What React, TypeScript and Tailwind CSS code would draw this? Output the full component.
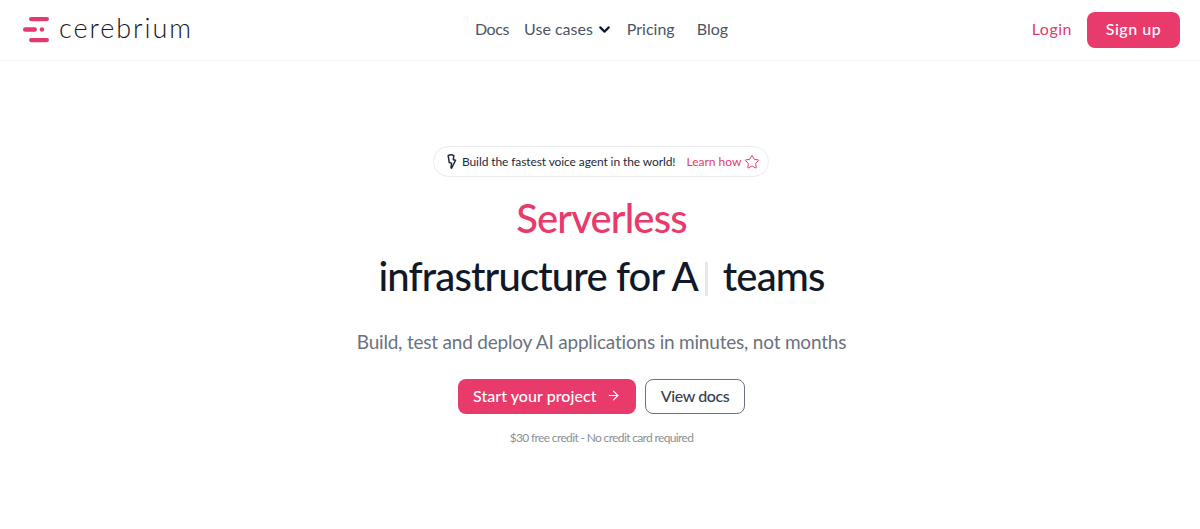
import { ArrowRight, ChevronDown, Star } from "lucide-react";

export default function App() {
  return (
    <div className="min-h-[529px] bg-white font-['Lato',sans-serif] text-[#1f2937]">
      <header className="flex h-[61px] items-center justify-between border-b border-[#f3f4f6] pl-[23px] pr-5">
        <div className="flex w-[300px] items-center gap-[9px]">
          <svg width="27" height="27" viewBox="0 0 27 27" className="mb-[2px] shrink-0">
            <g fill="#e23a6e">
              <rect x="6" y="1" width="20" height="4.2" rx="2.1" />
              <rect x="0" y="11.3" width="14" height="4.4" rx="2.2" />
              <circle cx="19" cy="13.5" r="2.2" />
              <rect x="6" y="22" width="20" height="4.2" rx="2.1" />
            </g>
          </svg>
          <span className="mb-1 text-[27px] font-light tracking-[1.95px] text-[#16181d]">cerebrium</span>
        </div>
        <nav className="mb-[2px] flex items-center text-[16px] text-[#4b5563]">
          <a className="tracking-[-0.4px]">Docs</a>
          <a className="ml-[15px] flex items-center">
            Use cases
            <ChevronDown size={17} strokeWidth={3} className="ml-[3px] text-[#111827]" />
          </a>
          <a className="ml-[14px]">Pricing</a>
          <a className="ml-[22px]">Blog</a>
        </nav>
        <div className="flex w-[300px] items-center justify-end gap-[15px]">
          <a className="mb-[2px] text-[16px] tracking-[0.5px] text-[#e23a6e]">Login</a>
          <button className="h-9 w-[93px] rounded-lg bg-[#e93a6c] pb-[2px] text-[16px] font-medium tracking-[0.5px] text-white">
            Sign up
          </button>
        </div>
      </header>

      <main className="flex flex-col items-center pt-[85px] pl-[3px]">
        <div className="ml-[-1px] flex h-[31px] w-[336px] items-center whitespace-nowrap rounded-full border border-[#e9ebee] pl-[10px] text-[12px]">
          <svg width="14" height="16" viewBox="0 0 24 28" fill="none" stroke="#1f2937" strokeWidth="2.6" strokeLinejoin="round" strokeLinecap="round" className="shrink-0">
            <path d="M7 3c3-2 7-2 10 0l-1 7 4 1-7 14-1-1 1-8-4-1L7 3z" />
          </svg>
          <span className="ml-[4px] tracking-[-0.1px] text-[#1f2937]">Build the fastest voice agent in the world!</span>
          <span className="ml-[11px] text-[#e23a6e]">Learn how</span>
          <Star size={16} strokeWidth={1.5} className="ml-[3px] text-[#e23a6e]" />
        </div>

        <h1 className="mt-[16px] text-center text-[40px] font-medium leading-[50px] tracking-[-0.85px]">
          <span className="block text-[#e93a6c]">Serverless</span>
          <span className="mt-[8px] flex items-center justify-center text-[#111827]">
            infrastructure for A
            <span className="ml-[7px] mr-[15px] h-[34px] w-[3px] translate-y-[3px] bg-[#e5e7eb]" />
            teams
          </span>
        </h1>

        <p className="mt-[27px] text-[19px] tracking-[-0.2px] text-[#6b7280]">
          Build, test and deploy AI applications in minutes, not months
        </p>

        <div className="mt-[22px] flex items-center gap-[9px]">
          <button className="flex h-[35px] w-[178px] items-center rounded-lg bg-[#e93a6c] pb-[1px] pl-[15px] text-[16px] font-medium tracking-[0.05px] text-white">
            Start your project
            <ArrowRight size={15} strokeWidth={1.75} className="ml-[10px]" />
          </button>
          <button className="h-[35px] w-[100px] rounded-lg border border-[#6b7280] pb-[1px] text-[16px] font-medium tracking-[-0.4px] text-[#374151]">
            View docs
          </button>
        </div>

        <p className="mt-[15px] text-[12px] tracking-[-0.65px] text-[#8b9099]">$30 free credit - No credit card required</p>
      </main>
    </div>
  );
}
